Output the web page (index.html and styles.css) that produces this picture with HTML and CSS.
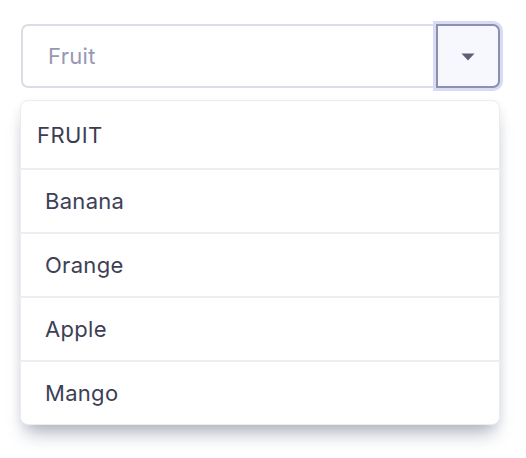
FILE: index.html
```html
<!DOCTYPE html>
<html lang="en">
<head>
<meta charset="utf-8">
<title>Fruit select</title>
<link rel="stylesheet" href="styles.css">
</head>
<body>
<div class="wrap">
  <div class="field">
    <div class="input">Fruit</div>
    <button class="toggle" type="button" aria-label="Open">
      <svg width="14" height="8" viewBox="0 0 14 8"><path d="M0.5 0.5 H13.5 L7 7.5 Z" fill="#5e5f75"/></svg>
    </button>
  </div>
  <div class="menu">
    <div class="menu-head">FRUIT</div>
    <div class="menu-item">Banana</div>
    <div class="menu-item">Orange</div>
    <div class="menu-item">Apple</div>
    <div class="menu-item">Mango</div>
  </div>
</div>
</body>
</html>
```
FILE: styles.css
```css
* { box-sizing: border-box; }
html, body { margin: 0; background: #ffffff; }
body {
  font-family: Inter, "Noto Sans", "Liberation Sans", sans-serif;
  color: #3d3f56;
  min-height: 458px;
}
.wrap {
  padding: 24px 26px 34px 20px;
  width: 526px;
}
.field {
  display: flex;
  height: 64px;
  margin-left: 1px;
}
.input {
  flex: 1;
  display: flex;
  align-items: center;
  padding-left: 25px;
  border: 2px solid #dcdce4;
  border-right: none;
  border-radius: 7px 0 0 7px;
  font-size: 22px;
  letter-spacing: 0.3px;
  color: #9897b5;
  background: #fff;
}
.toggle {
  width: 64px;
  height: 64px;
  padding: 0;
  margin: 0;
  display: flex;
  align-items: center;
  justify-content: center;
  background: #f7f8fd;
  border: 2px solid #8d8fac;
  border-radius: 0 7px 7px 0;
  box-shadow: 0 0 0 3px #d6dbf8;
}
.toggle svg { display: block; margin-top: 1px; }
.menu {
  margin-top: 12px;
  width: 480px;
  border: 1px solid #ececf0;
  border-radius: 8px;
  background: #fff;
  box-shadow: 0 14px 18px -6px rgba(60, 70, 100, 0.38), 0 3px 10px rgba(60, 70, 100, 0.07);
  overflow: hidden;
}
.menu-head {
  height: 67px;
  display: flex;
  align-items: center;
  padding-left: 16px;
  font-size: 22px;
  letter-spacing: 0.4px;
  color: #3b3d54;
}
.menu-item {
  height: 64px;
  display: flex;
  align-items: center;
  padding-left: 24px;
  font-size: 22px;
  letter-spacing: 0.3px;
  color: #3d3f56;
  border-top: 2px solid #eeeef2;
}
```
